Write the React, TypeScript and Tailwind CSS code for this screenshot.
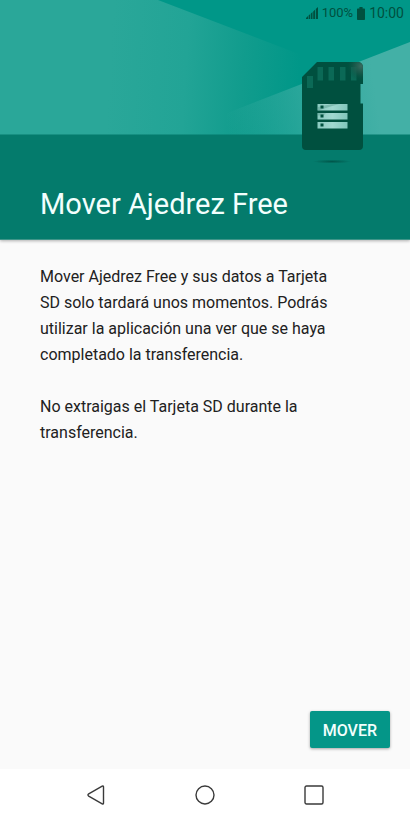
import type { ReactNode } from 'react'

function SignalIcon() {
  return (
    <svg viewBox="0 0 12 12" className="h-3 w-3" fill="currentColor" aria-hidden="true">
      <path d="M0 12v-1l2-2v3zM2.6 12V8.6l1.6-1.6v5zM4.9 12V6.5l1.6-1.6V12zM7.2 12V4.4l1.8-1.7V12zM9.8 12V2L12 0v12z" />
    </svg>
  )
}

function BatteryIcon() {
  return (
    <svg viewBox="0 0 8 13" className="h-[13px] w-2" fill="currentColor" aria-hidden="true">
      <path d="M2.4 0h3.2v1.5h1.6a.8.8 0 0 1 .8.8v9.9a.8.8 0 0 1-.8.8H.8a.8.8 0 0 1-.8-.8V2.3a.8.8 0 0 1 .8-.8h1.6z" />
    </svg>
  )
}

function HeaderArt() {
  return (
    <svg
      viewBox="0 0 410 240"
      preserveAspectRatio="xMaxYMin slice"
      className="absolute inset-0 h-full w-full"
      aria-hidden="true"
    >
      <defs>
        <linearGradient id="beam" gradientUnits="userSpaceOnUse" x1="110" y1="60" x2="300" y2="72">
          <stop offset="0" stopColor="#2aa799" />
          <stop offset="0.4" stopColor="#22a496" />
          <stop offset="0.7" stopColor="#119c8d" />
          <stop offset="1" stopColor="#009788" />
        </linearGradient>
        <linearGradient id="wedge" gradientUnits="userSpaceOnUse" x1="225" y1="112" x2="375" y2="90">
          <stop offset="0" stopColor="#43b0a6" stopOpacity="0" />
          <stop offset="0.5" stopColor="#43b0a6" stopOpacity="0.6" />
          <stop offset="1" stopColor="#43b0a6" />
        </linearGradient>
        <linearGradient id="label" x1="0" y1="0" x2="1" y2="0">
          <stop offset="0" stopColor="#8bcac0" />
          <stop offset="0.5" stopColor="#a0d8d0" />
          <stop offset="1" stopColor="#80c6bb" />
        </linearGradient>
        <radialGradient id="shadow">
          <stop offset="0" stopColor="#00564a" />
          <stop offset="1" stopColor="#00564a" stopOpacity="0" />
        </radialGradient>
        <radialGradient id="corner" gradientUnits="userSpaceOnUse" cx="361" cy="66" r="15">
          <stop offset="0" stopColor="#3a6a5f" />
          <stop offset="0.5" stopColor="#1d5a4c" stopOpacity="0.7" />
          <stop offset="1" stopColor="#00503f" stopOpacity="0" />
        </radialGradient>
      </defs>

      {/* Backdrop and light beams */}
      <path d="M0 0h410v135H0z" fill="#009788" />
      <path d="M0 0h158l154 59v76H0z" fill="url(#beam)" />
      <path d="M410 42v93H222v-20l18-7z" fill="url(#wedge)" />
      <path d="M0 134.5h410V240H0z" fill="#047b6c" />

      {/* SD card */}
      <ellipse cx="332" cy="161.5" rx="19" ry="2" fill="url(#shadow)" />
      <path
        d="M317 62h41a5 5 0 0 1 5 5v17h-2.5v19.5h2.5V146a4 4 0 0 1-4 4h-53a4 4 0 0 1-4-4V77z"
        fill="#00503f"
      />
      <path
        d="M307 76h6v12h-6zM317.5 67h5.5v13.5h-5.5zM328.5 67h5.5v13.5h-5.5zM340 67h5.5v13.5H340zM351 67h5.5v13.5H351z"
        fill="#0b6956"
      />
      <path d="M343 62h15a5 5 0 0 1 5 5v17h-20z" fill="url(#corner)" />
      <path d="M317.5 104h30v6.5h-30zM317.5 113h30v6.5h-30zM317.5 122h30v6.5h-30z" fill="url(#label)" />
      <path d="M318 110.5l11-3.5 10-3h-7l-14 3zM318 113l8 .5-3 2h-5z" fill="#5c9f91" opacity="0.5" />
      <path d="M320.5 105.5h3v3h-3zM320.5 114.5h3v3h-3zM320.5 123.5h3v3h-3z" fill="#00503f" />
    </svg>
  )
}

function NavButton({ label, children }: { label: string; children: ReactNode }) {
  return (
    <button type="button" aria-label={label} className="flex h-full flex-1 items-center justify-center">
      <svg
        viewBox="0 0 20 20"
        className="h-5 w-5 text-[#3a3a3a]"
        fill="none"
        stroke="currentColor"
        strokeWidth="1.4"
        strokeLinejoin="round"
        aria-hidden="true"
      >
        {children}
      </svg>
    </button>
  )
}

export default function App() {
  return (
    <div className="flex min-h-screen flex-col bg-[#fafafa] font-['Roboto',sans-serif] text-[#212121]">
      <header className="relative flex h-60 flex-col justify-between overflow-hidden border-b border-[#3f9589] shadow-[0_1px_3px_rgba(0,0,0,0.3)]">
        <HeaderArt />
        <div className="relative flex h-[26px] items-center justify-end gap-1 pr-[6px] text-[#00503f]">
          <SignalIcon />
          <span className="text-[13px]">100%</span>
          <BatteryIcon />
          <span className="text-sm">10:00</span>
        </div>
        <h1 className="relative px-10 pb-[17px] text-[29px] leading-9 text-[#f2fffd]">Mover Ajedrez Free</h1>
      </header>

      <main className="flex flex-1 flex-col">
        <div className="flex flex-col gap-[26px] px-10 pt-6 pr-[70px] text-base leading-[26px]">
          <p>
            Mover Ajedrez Free y sus datos a Tarjeta SD solo tardará unos momentos. Podrás utilizar la aplicación una
            ver que se haya completado la transferencia.
          </p>
          <p>No extraigas el Tarjeta SD durante la transferencia.</p>
        </div>
        <div className="mt-auto flex justify-end px-5 pb-[21px]">
          <button
            type="button"
            className="h-[37px] rounded-xs bg-[#049688] px-[13px] pt-0.5 text-base font-medium text-[#f2fffd] shadow-[0_1px_3px_rgba(0,0,0,0.35)]"
          >
            MOVER
          </button>
        </div>
      </main>

      <nav className="flex h-[51px] items-center bg-white px-[41px]" aria-label="Navegación">
        <NavButton label="Atrás">
          <path d="M2.7 8.9 16.2 1.2q1.3-.5 1.3.9v15.8q0 1.4-1.3.9L2.7 11.100q-1.5-1.1 0-2.2z" />
        </NavButton>
        <NavButton label="Inicio">
          <circle cx="10" cy="10" r="9" />
        </NavButton>
        <NavButton label="Recientes">
          <rect x="1" y="1" width="18" height="18" rx="1.5" />
        </NavButton>
      </nav>
    </div>
  )
}
